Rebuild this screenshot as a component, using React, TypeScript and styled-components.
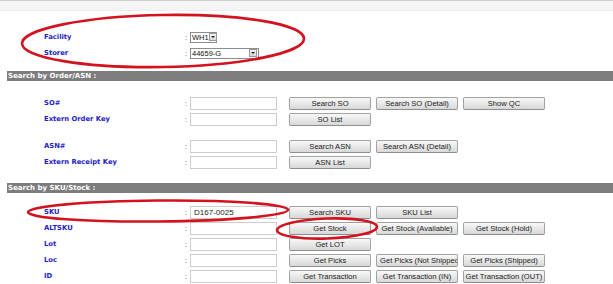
import React from "react";
import styled, { createGlobalStyle } from "styled-components";

const GlobalStyle = createGlobalStyle`
  html, body {
    margin: 0;
    padding: 0;
    background: #ffffff;
  }
`;

const Page = styled.div`
  position: relative;
  width: 613px;
  height: 284px;
  overflow: hidden;
  background: #ffffff;
  font-family: "DejaVu Sans", Verdana, sans-serif;
`;

const TopStrip = styled.div`
  height: 9px;
  border-top: 1px solid #cfcfcf;
  background: #f5f5f5;
  border-bottom: 1px solid #ededed;
`;

const Block = styled.div<{ $top: number; $bottom: number }>`
  padding-top: ${({ $top }) => $top}px;
  padding-bottom: ${({ $bottom }) => $bottom}px;
`;

const SectionHeader = styled.div`
  margin-left: 7px;
  height: 10px;
  line-height: 10px;
  background: #7d7d7d;
  color: #ffffff;
  font-weight: bold;
  font-size: 7px;
  padding-left: 1px;
  white-space: nowrap;
`;

const Row = styled.div`
  display: grid;
  grid-template-columns: 141px 5px 87px 1fr;
  align-items: center;
  height: 16px;
  padding-left: 44px;
`;

const Label = styled.span`
  color: #2222c4;
  font-weight: bold;
  font-size: 6.8px;
  white-space: nowrap;
`;

const Colon = styled.span`
  color: #555555;
  font-family: "Liberation Sans", Arial, sans-serif;
  font-size: 7.5px;
`;

const Field = styled.input`
  box-sizing: border-box;
  width: 87px;
  height: 13px;
  margin: 0;
  border: 1px solid #cccccc;
  background: #ffffff;
  padding: 0 3px;
  font-family: "Liberation Sans", Arial, sans-serif;
  font-size: 8px;
  color: #222222;
  outline: none;
`;

const SelectBox = styled.div<{ $width: number }>`
  box-sizing: border-box;
  width: ${({ $width }) => $width}px;
  height: 11px;
  border: 1px solid #8c8c8c;
  background: #ffffff;
  display: flex;
  align-items: center;
  justify-content: space-between;
  padding-left: 1px;
  font-family: "Liberation Sans", Arial, sans-serif;
  font-size: 7.5px;
  color: #111111;
  white-space: nowrap;
`;

const SelectArrow = styled.span`
  box-sizing: border-box;
  flex: none;
  width: 8px;
  height: 8px;
  margin-right: 1px;
  border: 1px solid #9a9a9a;
  background: linear-gradient(#f4f4f4, #d6d6d6);
  display: flex;
  align-items: center;
  justify-content: center;
  &::after {
    content: "";
    border-left: 2px solid transparent;
    border-right: 2px solid transparent;
    border-top: 2px solid #222222;
  }
`;

const Buttons = styled.div`
  display: flex;
  gap: 5px;
  margin-left: 12px;
`;

const Button = styled.button<{ $clip?: boolean }>`
  box-sizing: border-box;
  width: 82px;
  height: 13px;
  margin: 0;
  padding: 0 ${({ $clip }) => ($clip ? "3px" : "0")};
  border: 1px solid #a2a2a2;
  border-bottom-color: #8e8e8e;
  border-radius: 2px;
  background: linear-gradient(#f8f8f8, #d8d8d8);
  color: #1a1a1a;
  font-family: "Liberation Sans", Arial, sans-serif;
  font-size: 7.6px;
  line-height: 11px;
  white-space: nowrap;
  overflow: hidden;
  text-align: ${({ $clip }) => ($clip ? "left" : "center")};
`;

const Marks = styled.svg`
  position: absolute;
  left: 0;
  top: 0;
  pointer-events: none;
`;

type Line = { label: string; value?: string; buttons: string[] };

const orderLines: Line[][] = [
  [
    { label: "SO#", buttons: ["Search SO", "Search SO (Detail)", "Show QC"] },
    { label: "Extern Order Key", buttons: ["SO List"] },
  ],
  [
    { label: "ASN#", buttons: ["Search ASN", "Search ASN (Detail)"] },
    { label: "Extern Receipt Key", buttons: ["ASN List"] },
  ],
];

const skuLines: Line[] = [
  { label: "SKU", value: "D167-0025", buttons: ["Search SKU", "SKU List"] },
  { label: "ALTSKU", buttons: ["Get Stock", "Get Stock (Available)", "Get Stock (Hold)"] },
  { label: "Lot", buttons: ["Get LOT"] },
  { label: "Loc", buttons: ["Get Picks", "Get Picks (Not Shipped)", "Get Picks (Shipped)"] },
  { label: "ID", buttons: ["Get Transaction", "Get Transaction (IN)", "Get Transaction (OUT)"] },
];

const FormLine: React.FC<{ line: Line }> = ({ line }) => (
  <Row>
    <Label>{line.label}</Label>
    <Colon>:</Colon>
    <Field readOnly value={line.value ?? ""} />
    <Buttons>
      {line.buttons.map((b) => (
        <Button key={b} $clip={b === "Get Picks (Not Shipped)"}>
          {b}
        </Button>
      ))}
    </Buttons>
  </Row>
);

const App: React.FC = () => {
  return (
    <Page>
      <GlobalStyle />
      <TopStrip />

      {/* warehouse / storer */}
      <Block $top={18} $bottom={10}>
        <Row>
          <Label>Facility</Label>
          <Colon>:</Colon>
          <SelectBox $width={27}>
            WH1
            <SelectArrow />
          </SelectBox>
        </Row>
        <Row>
          <Label>Storer</Label>
          <Colon>:</Colon>
          <SelectBox $width={69}>
            44659-G
            <SelectArrow />
          </SelectBox>
        </Row>
      </Block>

      <SectionHeader>Search by Order/ASN :</SectionHeader>
      <Block $top={14} $bottom={0}>
        {orderLines[0].map((l) => (
          <FormLine key={l.label} line={l} />
        ))}
      </Block>
      <Block $top={11} $bottom={13}>
        {orderLines[1].map((l) => (
          <FormLine key={l.label} line={l} />
        ))}
      </Block>

      <SectionHeader>Search by SKU/Stock :</SectionHeader>
      <Block $top={11} $bottom={0}>
        {skuLines.map((l) => (
          <FormLine key={l.label} line={l} />
        ))}
      </Block>

      {/* hand drawn highlight rings */}
      <Marks width="613" height="284" viewBox="0 0 613 284">
        <g fill="none" stroke="#d3121f" strokeWidth="2.6">
          <ellipse cx="163" cy="41" rx="141" ry="26" transform="rotate(-1 163 41)" />
          <ellipse cx="158" cy="211" rx="130" ry="10.5" transform="rotate(-0.5 158 211)" />
          <ellipse cx="327" cy="228.5" rx="50" ry="10" transform="rotate(-2 327 228)" />
        </g>
      </Marks>
    </Page>
  );
};

export default App;
